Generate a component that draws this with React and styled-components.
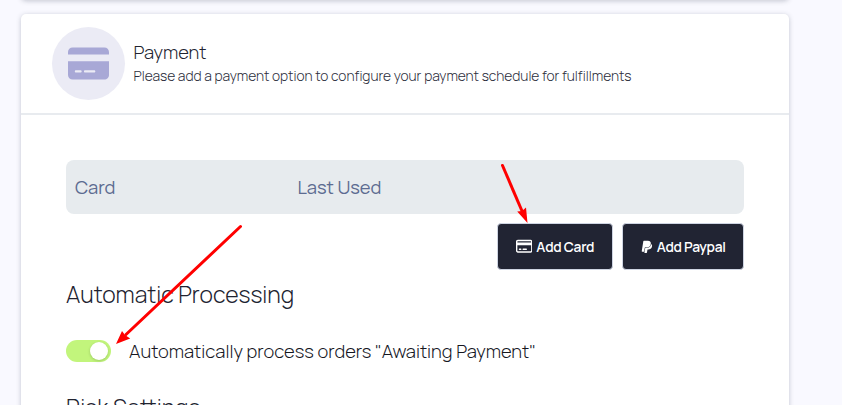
import React from "react";
import styled, { createGlobalStyle } from "styled-components";
import { FaCreditCard, FaRegCreditCard, FaPaypal } from "react-icons/fa6";

const GlobalStyle = createGlobalStyle`
  * {
    box-sizing: border-box;
  }
  body {
    margin: 0;
    background: #f9f9ff;
    overflow: hidden;
    font-family: Manrope, Inter, sans-serif;
  }
`;

const Page = styled.div`
  position: relative;
  display: flex;
  flex-direction: column;
  justify-content: flex-start;
  gap: 14px;
  height: 405px;
  padding: 0 53px 0 21px;
  overflow: hidden;
`;

const Panel = styled.section`
  flex: none;
  height: ${(props) => props.$height}px;
  margin-top: ${(props) => props.$offset || 0}px;
  background: #ffffff;
  border-radius: 5px;
  box-shadow: 0 1px 5px rgba(50, 60, 80, 0.27);
`;

const PanelHeader = styled.header`
  display: flex;
  align-items: center;
  gap: 8.5px;
  height: 101px;
  padding-left: 31px;
  border-bottom: 2px solid #e8ebef;
`;

const IconCircle = styled.div`
  display: flex;
  align-items: center;
  justify-content: center;
  width: 73px;
  height: 73px;
  border-radius: 50%;
  background: #ebebf5;
  color: #a8a8d6;
`;

const Text = styled.span`
  display: block;
  width: max-content;
  white-space: nowrap;
  font-size: ${(props) => props.$size}px;
  font-weight: ${(props) => props.$weight || 300};
  line-height: ${(props) => props.$line}px;
  letter-spacing: ${(props) => props.$spacing || 0}px;
  color: ${(props) => props.$color || "#212330"};
`;

const PanelBody = styled.div`
  padding: 45px 45px 0;
`;

const TableHead = styled.div`
  display: grid;
  grid-template-columns: 222.5px 1fr;
  align-items: center;
  height: 54px;
  padding-left: 9px;
  border-radius: 8px;
  background: #e7ebee;
`;

const Actions = styled.div`
  display: flex;
  justify-content: flex-end;
  gap: 9px;
  padding-top: 9px;
`;

const Button = styled.button`
  display: flex;
  align-items: center;
  justify-content: center;
  gap: ${(props) => props.$gap}px;
  width: ${(props) => props.$width}px;
  height: 47px;
  padding: 0;
  border: 1px solid #ced4e2;
  border-radius: 4px;
  background: #212433;
  color: #ffffff;
  font-family: inherit;
`;

const Heading = styled.h2`
  margin: 0;
  padding-top: ${(props) => props.$top}px;
`;

const ToggleRow = styled.div`
  display: flex;
  align-items: center;
  gap: 18px;
  padding-top: 30px;
`;

const Switch = styled.div`
  display: flex;
  align-items: center;
  justify-content: flex-end;
  width: 45px;
  height: 22px;
  padding: 0 3px;
  border-radius: 11px;
  background: #c2f57c;
`;

const Knob = styled.div`
  width: 18px;
  height: 18px;
  border-radius: 50%;
  background: #ffffff;
  box-shadow: 0 1px 3px rgba(0, 35, 11, 0.2);
`;

const Arrows = styled.svg`
  position: absolute;
  left: 0;
  top: 0;
  pointer-events: none;
`;

const App = () => {
  return (
    <Page>
      <GlobalStyle />
      <Panel $height={20} $offset={-20} />

      <Panel $height={420}>
        <PanelHeader>
          <IconCircle>
            <FaCreditCard size={41} />
          </IconCircle>
          <div>
            <Text $size={18.4} $line={25}>Payment</Text>
            <Text $size={13.8} $line={22} $spacing={-0.025} $color="#2b2d3b">
              Please add a payment option to configure your payment schedule for fulfillments
            </Text>
          </div>
        </PanelHeader>

        <PanelBody>
          <TableHead>
            <Text $size={18.4} $line={26} $weight={400} $spacing={-0.08} $color="#5d6b91">Card</Text>
            <Text $size={18.4} $line={26} $weight={400} $spacing={-0.08} $color="#5d6b91">Last Used</Text>
          </TableHead>

          <Actions>
            <Button $width={116} $gap={4}>
              <FaRegCreditCard size={16.5} />
              <Text $size={13.8} $line={20} $weight={600} $spacing={-0.3} $color="#ffffff">Add Card</Text>
            </Button>
            <Button $width={122} $gap={2.5}>
              <FaPaypal size={13.8} />
              <Text $size={13.8} $line={20} $weight={600} $spacing={-0.3} $color="#ffffff">Add Paypal</Text>
            </Button>
          </Actions>

          <Heading $top={8}>
            <Text $size={23} $line={32} $spacing={-0.03}>Automatic Processing</Text>
          </Heading>

          <ToggleRow>
            <Switch>
              <Knob />
            </Switch>
            <Text $size={18.4} $line={22} $color="#16171f">
              Automatically process orders "Awaiting Payment"
            </Text>
          </ToggleRow>

          <Heading $top={29}>
            <Text $size={23} $line={32}>Risk Settings</Text>
          </Heading>
        </PanelBody>
      </Panel>

      <Arrows width="842" height="405" viewBox="0 0 842 405" fill="#ff0000">
        <path d="M502.5 165.5L522 211" stroke="#ff0000" strokeWidth="3" strokeLinecap="round" />
        <path d="M527.5 223L517.2 211.5L522 211L526 207.5Z" />
        <path d="M240.5 226.5L126 334.5" stroke="#ff0000" strokeWidth="3" strokeLinecap="round" />
        <path d="M116 344L122 331L125 335L130.2 338.5Z" />
      </Arrows>
    </Page>
  );
};

export default App;
